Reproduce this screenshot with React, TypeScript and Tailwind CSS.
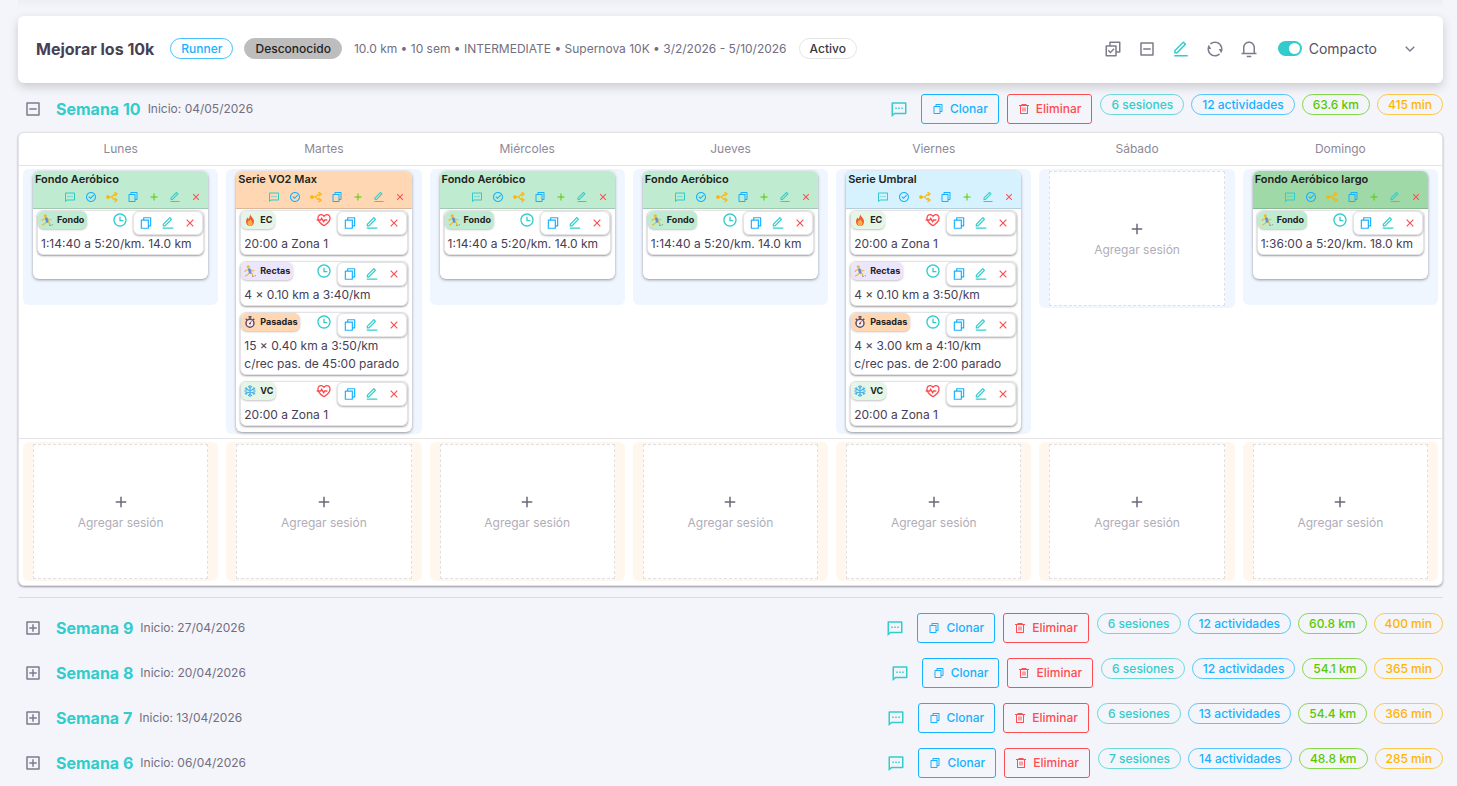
import { clsx } from "clsx";
import type { ReactNode } from "react";
import {
  RiAddBoxLine,
  RiAddLine,
  RiArrowDownSLine,
  RiCheckboxCircleLine,
  RiCheckboxIndeterminateLine,
  RiCheckboxMultipleLine,
  RiCloseLine,
  RiDeleteBin6Line,
  RiEditLine,
  RiFileCopyLine,
  RiHeartPulseLine,
  RiMessage2Line,
  RiNotification3Line,
  RiRefreshLine,
  RiTimeLine,
} from "react-icons/ri";

type ActivityKind = "fondo" | "ec" | "rectas" | "pasadas" | "vc";

type Activity = { kind: ActivityKind; lines: string[] };

type Session = { title: string; tone: string; activities: Activity[] };

type Week = {
  name: string;
  start: string;
  sessions: string;
  activities: string;
  distance: string;
  duration: string;
};

const days = ["Lunes", "Martes", "Miércoles", "Jueves", "Viernes", "Sábado", "Domingo"];

const kinds = {
  fondo: { label: "Fondo", bg: "bg-[#bfebd1]", heart: false, icon: RunnerIcon },
  ec: { label: "EC", bg: "bg-[#e6f6e6]", heart: true, icon: FireIcon },
  rectas: { label: "Rectas", bg: "bg-[#ece6fd]", heart: false, icon: RunnerIcon },
  pasadas: { label: "Pasadas", bg: "bg-[#ffd7b3]", heart: false, icon: StopwatchIcon },
  vc: { label: "VC", bg: "bg-[#e6f6e6]", heart: true, icon: SnowIcon },
};

const fondo = (tone: string, title: string, text: string): Session => ({
  title,
  tone,
  activities: [{ kind: "fondo", lines: [text] }],
});

const green = "bg-[#bfebd1]";

const sessions: (Session | null)[] = [
  fondo(green, "Fondo Aeróbico", "1:14:40 a 5:20/km. 14.0 km"),
  {
    title: "Serie VO2 Max",
    tone: "bg-[#ffd7b3]",
    activities: [
      { kind: "ec", lines: ["20:00 a Zona 1"] },
      { kind: "rectas", lines: ["4 × 0.10 km a 3:40/km"] },
      { kind: "pasadas", lines: ["15 × 0.40 km a 3:50/km", "c/rec pas. de 45:00 parado"] },
      { kind: "vc", lines: ["20:00 a Zona 1"] },
    ],
  },
  fondo(green, "Fondo Aeróbico", "1:14:40 a 5:20/km. 14.0 km"),
  fondo(green, "Fondo Aeróbico", "1:14:40 a 5:20/km. 14.0 km"),
  {
    title: "Serie Umbral",
    tone: "bg-[#d6f2ff]",
    activities: [
      { kind: "ec", lines: ["20:00 a Zona 1"] },
      { kind: "rectas", lines: ["4 × 0.10 km a 3:50/km"] },
      { kind: "pasadas", lines: ["4 × 3.00 km a 4:10/km", "c/rec pas. de 2:00 parado"] },
      { kind: "vc", lines: ["20:00 a Zona 1"] },
    ],
  },
  null,
  fondo("bg-[#a0d9a8]", "Fondo Aeróbico largo", "1:36:00 a 5:20/km. 18.0 km"),
];

const openWeek: Week = {
  name: "Semana 10",
  start: "04/05/2026",
  sessions: "6 sesiones",
  activities: "12 actividades",
  distance: "63.6 km",
  duration: "415 min",
};

const closedWeeks: Week[] = [
  { name: "Semana 9", start: "27/04/2026", sessions: "6 sesiones", activities: "12 actividades", distance: "60.8 km", duration: "400 min" },
  { name: "Semana 8", start: "20/04/2026", sessions: "6 sesiones", activities: "12 actividades", distance: "54.1 km", duration: "365 min" },
  { name: "Semana 7", start: "13/04/2026", sessions: "6 sesiones", activities: "13 actividades", distance: "54.4 km", duration: "366 min" },
  { name: "Semana 6", start: "06/04/2026", sessions: "7 sesiones", activities: "14 actividades", distance: "48.8 km", duration: "285 min" },
];

function RunnerIcon() {
  return (
    <svg viewBox="0 0 24 24" className="size-3 shrink-0" fill="none" strokeLinecap="round" strokeLinejoin="round">
      <path d="M10 9l-5 1-3 3M13 9l3 3 4-1" stroke="#f2b632" strokeWidth="2.2" />
      <path d="M10 16l-2 3-5 3" stroke="#f2b632" strokeWidth="2.4" />
      <path d="M14 16l3 2v4" stroke="#f2b632" strokeWidth="2.4" />
      <path d="M10.500 9l2 6" stroke="#5b93d6" strokeWidth="5" />
      <circle cx="8.500" cy="3.500" r="3.200" fill="#f2b632" />
      <path d="M18 22.500h.5M22.500 21.500h.1" stroke="#6b7690" strokeWidth="2.400" />
    </svg>
  );
}

function FireIcon() {
  return (
    <svg viewBox="0 0 24 24" className="size-3 shrink-0">
      <path d="M12 0c1 5 8 8 8 15 0 5-3 9-8 9s-8-4-8-9c0-4 2-6 3-8 1 1 1 2 2 3 2-3 3-6 3-10z" fill="#ee5a37" />
      <path d="M13 9c0 4 4 5 4 9 0 3-2 6-5 6s-5-3-5-6 2-4 3-6c1 1 1 2 1 2 1-1 2-3 2-5z" fill="#fbb13c" />
    </svg>
  );
}

function StopwatchIcon() {
  return (
    <svg viewBox="0 0 24 24" className="size-3 shrink-0" fill="none">
      <path d="M9 1.5h6M12 2v4M3.5 5.5l3 3M20.500 5.500l-3 3" stroke="#5d4f63" strokeWidth="3" />
      <circle cx="12" cy="14.500" r="8" fill="#f5eef3" stroke="#5d4f63" strokeWidth="3" />
      <path d="M12 15l3-5" stroke="#e0455e" strokeWidth="2" />
      <circle cx="12" cy="15" r="2" fill="#5d4f63" />
    </svg>
  );
}

function SnowIcon() {
  return (
    <svg viewBox="0 0 24 24" className="size-3 shrink-0" fill="none" stroke="#4fb3ea" strokeWidth="2.400" strokeLinecap="round">
      <path d="M12 1v22M2.500 6.500l19 11M21.500 6.500l-19 11" />
      <path d="M9 3l3 3 3-3M9 21l3-3 3 3M2 10.500l4-1-1-4M22 13.500l-4 1 1 4M22 10.500l-4-1 1-4M2 13.500l4 1-1 4" />
    </svg>
  );
}

function BranchIcon() {
  return (
    <svg viewBox="0 0 24 24" className="size-3" fill="none" stroke="currentColor" strokeWidth="2.400">
      <path d="M5 12h5c4 0 3-6 9-6M10 12c4 0 3 6 9 6" />
      <circle cx="4" cy="12" r="2.500" fill="currentColor" />
      <path d="M17 2l5 4-5 4M17 14l5 4-5 4" />
    </svg>
  );
}

function IconButton({ label, className, children }: { label: string; className?: string; children: ReactNode }) {
  return (
    <button type="button" aria-label={label} className={clsx("flex shrink-0 items-center justify-center", className)}>
      {children}
    </button>
  );
}

function Chip({ className, children }: { className: string; children: ReactNode }) {
  return (
    <span className={clsx("flex h-[21px] items-center whitespace-nowrap rounded-full border px-2.5 text-xs font-medium", className)}>
      {children}
    </span>
  );
}

function PlanHeader() {
  return (
    <header className="mt-2 flex h-[67px] items-center rounded-md bg-white pb-0.5 pl-[18px] pr-4 shadow-[0_4px_10px_rgba(58,53,65,0.22)]">
      <h1 className="text-base font-bold text-[#474055]">Mejorar los 10k</h1>
      <Chip className="ml-4 border-[#16b1ff]/80 text-[#16b1ff]">Runner</Chip>
      <Chip className="ml-[11px] border-[#bdbdbd] bg-[#bdbdbd] text-[#222]">Desconocido</Chip>
      <p className="ml-3 text-xs text-[#736e80]">
        10.0 km • 10 sem • INTERMEDIATE • Supernova 10K • 3/2/2026 - 5/10/2026
      </p>
      <Chip className="ml-3 border-[#e4e3e6] text-[#3a3541]">Activo</Chip>
      <div className="ml-auto flex items-center gap-4 text-[#7f7a8c]">
        <IconButton label="Seleccionar todo"><RiCheckboxMultipleLine size={18} /></IconButton>
        <IconButton label="Contraer todo"><RiCheckboxIndeterminateLine size={18} /></IconButton>
        <IconButton label="Editar plan" className="text-[#33cccc]"><RiEditLine size={18} /></IconButton>
        <IconButton label="Actualizar"><RiRefreshLine size={18} /></IconButton>
        <IconButton label="Notificaciones"><RiNotification3Line size={18} /></IconButton>
        <label className="ml-1 flex items-center gap-[7px] text-sm text-[#565063]">
          <input
            type="checkbox"
            role="switch"
            defaultChecked
            className="flex h-[15px] w-6 appearance-none items-center justify-end rounded-full bg-[#33cccc] px-0.5 before:size-[11px] before:rounded-full before:bg-white"
          />
          Compacto
        </label>
        <IconButton label="Desplegar" className="mx-2"><RiArrowDownSLine size={18} /></IconButton>
      </div>
    </header>
  );
}

function WeekRow({ week, open = false }: { week: Week; open?: boolean }) {
  return (
    <div className="flex h-[30px] items-center">
      <IconButton label={open ? "Contraer semana" : "Expandir semana"} className="ml-1.5 text-[#7f7a8c]">
        {open ? <RiCheckboxIndeterminateLine size={18} /> : <RiAddBoxLine size={18} />}
      </IconButton>
      <h2 className="ml-3.5 text-base font-bold text-[#33cccc]">{week.name}</h2>
      <p className="ml-[7px] text-xs text-[#736e80]">Inicio: {week.start}</p>
      <div className="ml-auto flex items-center gap-2">
        <IconButton label="Comentarios" className="mr-[5px] text-[#33cccc]"><RiMessage2Line size={18} /></IconButton>
        <button type="button" className="flex h-[30px] items-center gap-1.5 rounded-[3px] border border-[#16b1ff] px-2.5 text-xs font-medium text-[#16b1ff]">
          <RiFileCopyLine size={12} />
          Clonar
        </button>
        <button type="button" className="flex h-[30px] items-center gap-1.5 rounded-[3px] border border-[#ff4c51] px-2.5 text-xs font-medium text-[#ff4c51]">
          <RiDeleteBin6Line size={12} />
          Eliminar
        </button>
        <div className="flex gap-[7px] self-start">
          <Chip className="border-[#33cccc]/70 text-[#33cccc]">{week.sessions}</Chip>
          <Chip className="border-[#16b1ff]/70 text-[#16b1ff]">{week.activities}</Chip>
          <Chip className="border-[#56ca00]/70 text-[#56ca00]">{week.distance}</Chip>
          <Chip className="border-[#ffb400]/70 text-[#ffb400]">{week.duration}</Chip>
        </div>
      </div>
    </div>
  );
}

function ActivityCard({ activity }: { activity: Activity }) {
  const kind = kinds[activity.kind];
  const StateIcon = kind.heart ? RiHeartPulseLine : RiTimeLine;
  return (
    <li className="rounded-md border border-[#e4e3e6] bg-white pb-px shadow-[0_1px_2px_rgba(58,53,65,0.5)]">
      <div className="flex h-6 items-start">
        <span className={clsx("flex h-[18px] items-center gap-1 rounded-md px-[3px] text-[9px] font-bold text-[#222] shadow-[0_1px_2px_rgba(58,53,65,0.3)]", kind.bg)}>
          <kind.icon />
          {kind.label}
        </span>
        <StateIcon size={16} className={clsx("ml-auto mt-px", kind.heart ? "text-[#ff4c51]" : "text-[#33cccc]")} />
        <div className="ml-[5px] flex h-6 items-center gap-2 rounded-md border border-[#e4e3e6] bg-white px-[5px] shadow-[0_1px_2px_rgba(58,53,65,0.4)]">
          <IconButton label="Copiar actividad" className="text-[#16b1ff]"><RiFileCopyLine size={14} /></IconButton>
          <IconButton label="Editar actividad" className="text-[#33cccc]"><RiEditLine size={14} /></IconButton>
          <IconButton label="Eliminar actividad" className="text-[#ff4c51]"><RiCloseLine size={14} /></IconButton>
        </div>
      </div>
      <div className="pl-[3px] text-xs leading-[18px] text-[#474055]">
        {activity.lines.map((line) => (
          <p key={line} className="whitespace-nowrap">{line}</p>
        ))}
      </div>
    </li>
  );
}

function SessionCard({ session }: { session: Session }) {
  return (
    <article className="min-h-[108px] overflow-hidden rounded-md bg-white shadow-[0_1px_3px_rgba(58,53,65,0.5)]">
      <div className={clsx("h-[38px] border-b border-black/15 px-0.5", session.tone)}>
        <h3 className="text-[11px] font-semibold leading-4 text-[#222]">{session.title}</h3>
        <div className="flex justify-end gap-[9px] pr-1 pt-1">
          <IconButton label="Comentar sesión" className="text-[#33cccc]"><RiMessage2Line size={12} /></IconButton>
          <IconButton label="Completar sesión" className="text-[#16b1ff]"><RiCheckboxCircleLine size={12} /></IconButton>
          <IconButton label="Dividir sesión" className="text-[#ffb400]"><BranchIcon /></IconButton>
          <IconButton label="Copiar sesión" className="text-[#16b1ff]"><RiFileCopyLine size={12} /></IconButton>
          <IconButton label="Agregar actividad" className="text-[#56ca00]"><RiAddLine size={12} /></IconButton>
          <IconButton label="Editar sesión" className="text-[#33cccc]"><RiEditLine size={12} /></IconButton>
          <IconButton label="Eliminar sesión" className="text-[#ff4c51]"><RiCloseLine size={12} /></IconButton>
        </div>
      </div>
      <ul className="flex flex-col gap-1.5 px-1 pb-1.5 pt-px">
        {session.activities.map((activity, index) => (
          <ActivityCard key={index} activity={activity} />
        ))}
      </ul>
    </article>
  );
}

function AddSession() {
  return (
    <button type="button" className="flex h-[135px] w-full flex-col items-center justify-center gap-1 border border-dashed border-[#e0dfe3] bg-white text-xs text-[#b0adb8]">
      <RiAddLine size={18} className="text-[#6d6779]" />
      Agregar sesión
    </button>
  );
}

function WeekBoard() {
  return (
    <section className="mt-2 rounded-md border border-[#e4e3e6] bg-white pb-px shadow-[0_1px_2px_rgba(58,53,65,0.5)]">
      <div className="grid grid-cols-7 border-b border-[#e4e3e6]">
        {days.map((day) => (
          <h3 key={day} className="text-center text-xs leading-8 text-[#8d8998]">{day}</h3>
        ))}
      </div>
      <div className="grid grid-cols-7 items-start border-b border-[#e4e3e6]">
        {sessions.map((session, index) => (
          <div key={index} className="mx-1 mb-1 mt-[3px] min-h-[136px] rounded-md bg-[#eff6ff] px-2.5 py-0.5">
            {session ? <SessionCard session={session} /> : <AddSession />}
          </div>
        ))}
      </div>
      <div className="grid grid-cols-7">
        {days.map((day) => (
          <div key={day} className="mx-1 my-[3px] rounded-md bg-[#fff6ed] px-2.5 py-0.5">
            <AddSession />
          </div>
        ))}
      </div>
    </section>
  );
}

export default function App() {
  return (
    <div className="min-h-screen bg-[#f4f5fa] font-['Inter',sans-serif]">
      <main className="pl-[18px] pr-3.5">
        <div className="h-2 bg-linear-to-b from-[#edeef3] to-[#f4f5fa]" />
        <PlanHeader />
        <div className="mt-[11px]">
          <WeekRow week={openWeek} open />
        </div>
        <WeekBoard />
        <div className="mt-[11px] flex flex-col gap-[15px] border-t border-[#dbdce1] pb-2 pt-[15px]">
          {closedWeeks.map((week) => (
            <WeekRow key={week.name} week={week} />
          ))}
        </div>
      </main>
    </div>
  );
}
